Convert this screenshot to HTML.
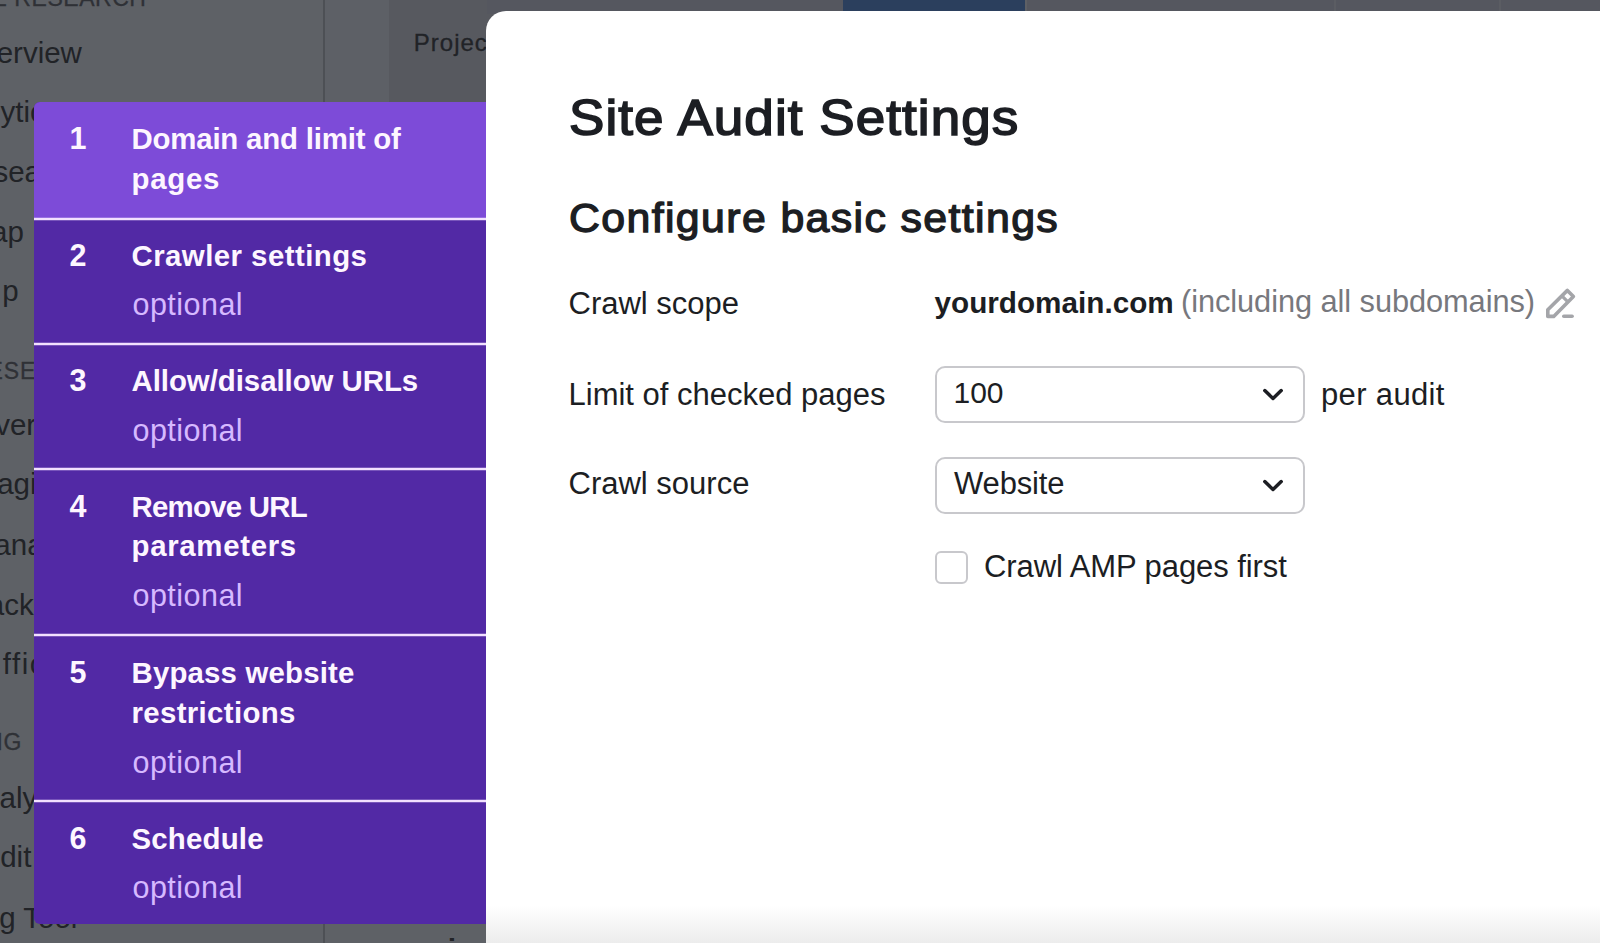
<!DOCTYPE html>
<html>
<head>
<meta charset="utf-8">
<style>
html,body{margin:0;padding:0;}
body{width:1600px;height:943px;overflow:hidden;position:relative;background:#5e6166;font-family:"Liberation Sans",sans-serif;}
div{position:absolute;}
.t{white-space:nowrap;}
</style>
</head>
<body>
<div style="left:0;top:0;width:323px;height:943px;background:#5e6166;"></div>
<div style="left:323px;top:0;width:2px;height:943px;background:#4d5055;"></div>
<div style="left:325px;top:0;width:64px;height:110px;background:#5d6066;"></div>
<div style="left:389px;top:0;width:1211px;height:110px;background:#57595f;"></div>
<div style="left:487px;top:0;width:1113px;height:14px;background:#55575f;"></div>
<div style="left:1334px;top:0;width:2px;height:14px;background:#5b5d63;"></div>
<div style="left:1499px;top:0;width:2px;height:14px;background:#5b5d63;"></div>
<div style="left:1025px;top:0;width:2px;height:14px;background:#5e6065;"></div>
<div style="left:843px;top:0;width:182px;height:12px;background:#2b3f5d;"></div>
<div class="t" style="right:1518.10px;top:38.03px;font-size:29.5px;line-height:29.5px;color:#212327;">Overview</div>
<div class="t" style="left:0.60px;top:96.73px;font-size:29.5px;line-height:29.5px;font-weight:400;color:#212327;letter-spacing:0px;">ytics</div>
<div class="t" style="left:-6.60px;top:156.73px;font-size:29.5px;line-height:29.5px;font-weight:400;color:#212327;letter-spacing:0px;">search</div>
<div class="t" style="left:-8.90px;top:216.83px;font-size:29.5px;line-height:29.5px;font-weight:400;color:#212327;letter-spacing:0px;">ap</div>
<div class="t" style="left:2.20px;top:276.23px;font-size:29.5px;line-height:29.5px;font-weight:400;color:#212327;letter-spacing:0px;">p</div>
<div class="t" style="left:-4.85px;top:410.23px;font-size:29.5px;line-height:29.5px;font-weight:400;color:#212327;letter-spacing:0px;">ver</div>
<div class="t" style="left:-2.80px;top:469.13px;font-size:29.5px;line-height:29.5px;font-weight:400;color:#212327;letter-spacing:0px;">agic</div>
<div class="t" style="left:-5.70px;top:529.73px;font-size:29.5px;line-height:29.5px;font-weight:400;color:#212327;letter-spacing:0px;">anager</div>
<div class="t" style="left:-12.20px;top:589.63px;font-size:29.5px;line-height:29.5px;font-weight:400;color:#212327;letter-spacing:0px;">acking</div>
<div class="t" style="left:2.80px;top:649.33px;font-size:29.5px;line-height:29.5px;font-weight:400;color:#212327;letter-spacing:1.5px;">ffic</div>
<div class="t" style="left:-0.50px;top:782.73px;font-size:29.5px;line-height:29.5px;font-weight:400;color:#212327;letter-spacing:0px;">alytics</div>
<div class="t" style="left:0.20px;top:842.43px;font-size:29.5px;line-height:29.5px;font-weight:400;color:#212327;letter-spacing:0px;">dit</div>
<div class="t" style="left:-0.80px;top:902.93px;font-size:29.5px;line-height:29.5px;font-weight:400;color:#212327;letter-spacing:0px;">g Tool</div>
<div class="t" style="left:-8.50px;top:-12.97px;font-size:23px;line-height:23px;font-weight:400;color:#2f3136;letter-spacing:0.55px;-webkit-text-stroke:0.3px #2f3136;">E RESEARCH</div>
<div class="t" style="left:-12.40px;top:359.53px;font-size:23px;line-height:23px;font-weight:400;color:#2f3136;letter-spacing:0.8px;-webkit-text-stroke:0.3px #2f3136;">ESEARCH</div>
<div class="t" style="left:-13.90px;top:731.13px;font-size:23px;line-height:23px;font-weight:400;color:#2f3136;letter-spacing:0.8px;-webkit-text-stroke:0.3px #2f3136;">NG</div>
<div class="t" style="left:413.80px;top:31.28px;font-size:24px;line-height:24px;font-weight:400;color:#212327;letter-spacing:1.0px;-webkit-text-stroke:0.3px #212327;">Projects</div>
<div class="t" style="left:409.00px;top:934.61px;font-size:30px;line-height:30px;font-weight:700;color:#212327;letter-spacing:1px;">ooing</div>
<div style="left:486px;top:11px;width:1200px;height:1000px;background:#fff;border-top-left-radius:20px;"></div>
<div style="left:486px;top:905px;width:1114px;height:38px;background:linear-gradient(#ffffff,#ececec);"></div>
<div style="left:34px;top:102px;width:452px;height:822px;background:#5229a5;border-radius:6px 0 0 6px;"></div>
<div style="left:34px;top:102px;width:452px;height:116px;background:#7d4bd8;border-radius:6px 0 0 0;"></div>
<div style="left:34px;top:218px;width:452px;height:2px;background:#f2e0ff;box-shadow:0 -0.5px 0 #f2e0ff80, 0 0.5px 0 #f2e0ff80;"></div>
<div style="left:34px;top:343px;width:452px;height:2px;background:#f2e0ff;box-shadow:0 -0.5px 0 #f2e0ff80, 0 0.5px 0 #f2e0ff80;"></div>
<div style="left:34px;top:468px;width:452px;height:2px;background:#f2e0ff;box-shadow:0 -0.5px 0 #f2e0ff80, 0 0.5px 0 #f2e0ff80;"></div>
<div style="left:34px;top:634px;width:452px;height:2px;background:#f2e0ff;box-shadow:0 -0.5px 0 #f2e0ff80, 0 0.5px 0 #f2e0ff80;"></div>
<div style="left:34px;top:800px;width:452px;height:2px;background:#f2e0ff;box-shadow:0 -0.5px 0 #f2e0ff80, 0 0.5px 0 #f2e0ff80;"></div>
<div class="t" style="left:69.50px;top:122.78px;font-size:30.5px;line-height:30.5px;font-weight:700;color:#fdf6ff;letter-spacing:0px;">1</div>
<div class="t" style="left:131.50px;top:123.71px;font-size:29.4px;line-height:29.4px;font-weight:700;color:#fdf6ff;letter-spacing:-0.19px;">Domain and limit of</div>
<div class="t" style="left:131.50px;top:164.11px;font-size:29.4px;line-height:29.4px;font-weight:700;color:#fdf6ff;letter-spacing:0.75px;">pages</div>
<div class="t" style="left:69.50px;top:239.98px;font-size:30.5px;line-height:30.5px;font-weight:700;color:#fdf6ff;letter-spacing:0px;">2</div>
<div class="t" style="left:131.50px;top:240.91px;font-size:29.4px;line-height:29.4px;font-weight:700;color:#fdf6ff;letter-spacing:0.45px;">Crawler settings</div>
<div class="t" style="left:132.50px;top:288.68px;font-size:30.5px;line-height:30.5px;font-weight:400;color:#d6b9ff;letter-spacing:0.47px;">optional</div>
<div class="t" style="left:69.50px;top:365.18px;font-size:30.5px;line-height:30.5px;font-weight:700;color:#fdf6ff;letter-spacing:0px;">3</div>
<div class="t" style="left:131.50px;top:366.11px;font-size:29.4px;line-height:29.4px;font-weight:700;color:#fdf6ff;letter-spacing:-0.04px;">Allow/disallow URLs</div>
<div class="t" style="left:132.50px;top:414.78px;font-size:30.5px;line-height:30.5px;font-weight:400;color:#d6b9ff;letter-spacing:0.47px;">optional</div>
<div class="t" style="left:69.50px;top:490.68px;font-size:30.5px;line-height:30.5px;font-weight:700;color:#fdf6ff;letter-spacing:0px;">4</div>
<div class="t" style="left:131.50px;top:491.61px;font-size:29.4px;line-height:29.4px;font-weight:700;color:#fdf6ff;letter-spacing:-0.74px;">Remove URL</div>
<div class="t" style="left:131.50px;top:530.91px;font-size:29.4px;line-height:29.4px;font-weight:700;color:#fdf6ff;letter-spacing:0.69px;">parameters</div>
<div class="t" style="left:132.50px;top:580.48px;font-size:30.5px;line-height:30.5px;font-weight:400;color:#d6b9ff;letter-spacing:0.47px;">optional</div>
<div class="t" style="left:69.50px;top:656.58px;font-size:30.5px;line-height:30.5px;font-weight:700;color:#fdf6ff;letter-spacing:0px;">5</div>
<div class="t" style="left:131.50px;top:657.51px;font-size:29.4px;line-height:29.4px;font-weight:700;color:#fdf6ff;letter-spacing:0.18px;">Bypass website</div>
<div class="t" style="left:131.50px;top:698.11px;font-size:29.4px;line-height:29.4px;font-weight:700;color:#fdf6ff;letter-spacing:0.35px;">restrictions</div>
<div class="t" style="left:132.50px;top:747.18px;font-size:30.5px;line-height:30.5px;font-weight:400;color:#d6b9ff;letter-spacing:0.47px;">optional</div>
<div class="t" style="left:69.50px;top:822.58px;font-size:30.5px;line-height:30.5px;font-weight:700;color:#fdf6ff;letter-spacing:0px;">6</div>
<div class="t" style="left:131.50px;top:823.51px;font-size:29.4px;line-height:29.4px;font-weight:700;color:#fdf6ff;letter-spacing:0.19px;">Schedule</div>
<div class="t" style="left:132.50px;top:872.18px;font-size:30.5px;line-height:30.5px;font-weight:400;color:#d6b9ff;letter-spacing:0.47px;">optional</div>
<div class="t" style="left:568.50px;top:93.18px;font-size:50px;line-height:50px;font-weight:400;color:#1c1e23;letter-spacing:1.0px;-webkit-text-stroke:1.6px #1c1e23;transform:scaleX(1.06);transform-origin:0 0;">Site Audit Settings</div>
<div class="t" style="left:568.50px;top:197.64px;font-size:40px;line-height:40px;font-weight:400;color:#1c1e23;letter-spacing:1.3px;-webkit-text-stroke:1.3px #1c1e23;transform:scaleX(1.07);transform-origin:0 0;">Configure basic settings</div>
<div class="t" style="left:568.50px;top:287.66px;font-size:31px;line-height:31px;font-weight:400;color:#1c1e23;letter-spacing:0px;">Crawl scope</div>
<div class="t" style="left:934.50px;top:287.86px;font-size:29.7px;line-height:29.7px;font-weight:700;color:#1c1e23;letter-spacing:0px;">yourdomain.com</div>
<div class="t" style="left:1181.00px;top:287.47px;font-size:30.75px;line-height:30.75px;font-weight:400;color:#77787d;letter-spacing:-0.06px;">(including all subdomains)</div>
<svg style="position:absolute;left:1540px;top:284px;" width="40" height="40" viewBox="0 0 40 40">
  <path d="M7.8 32.4 L7.8 25.8 L27.4 6.4 L33.4 12.5 L13.7 32.4 Z" fill="none" stroke="#a4a5a9" stroke-width="3.6" stroke-linejoin="round"/>
  <path d="M21.9 11.9 L28.4 18.4" stroke="#a4a5a9" stroke-width="3.2"/>
  <path d="M23.8 32.3 L32.1 32.3" stroke="#a4a5a9" stroke-width="3.6" stroke-linecap="round"/>
</svg>
<div class="t" style="left:568.50px;top:378.56px;font-size:31px;line-height:31px;font-weight:400;color:#1c1e23;letter-spacing:0px;">Limit of checked pages</div>
<div style="left:935px;top:366px;width:366px;height:53px;border:2px solid #c8c8cc;border-radius:10px;background:#fff;"></div>
<div class="t" style="left:953.50px;top:378.11px;font-size:30px;line-height:30px;font-weight:400;color:#1c1e23;letter-spacing:0px;">100</div>
<svg style="position:absolute;left:1260px;top:386px;" width="26" height="18" viewBox="0 0 26 18"><path d="M4.8 4.6 L13 12.4 L21.2 4.6" fill="none" stroke="#1c1e23" stroke-width="3.5" stroke-linecap="round" stroke-linejoin="round"/></svg>
<div class="t" style="left:1321.00px;top:378.56px;font-size:31px;line-height:31px;font-weight:400;color:#1c1e23;letter-spacing:0.35px;">per audit</div>
<div class="t" style="left:568.50px;top:468.36px;font-size:31px;line-height:31px;font-weight:400;color:#1c1e23;letter-spacing:0px;">Crawl source</div>
<div style="left:935px;top:457px;width:366px;height:53px;border:2px solid #c8c8cc;border-radius:10px;background:#fff;"></div>
<div class="t" style="left:954.00px;top:468.36px;font-size:31px;line-height:31px;font-weight:400;color:#1c1e23;letter-spacing:-0.15px;">Website</div>
<svg style="position:absolute;left:1260px;top:477px;" width="26" height="18" viewBox="0 0 26 18"><path d="M4.8 4.6 L13 12.4 L21.2 4.6" fill="none" stroke="#1c1e23" stroke-width="3.5" stroke-linecap="round" stroke-linejoin="round"/></svg>
<div style="left:935px;top:551px;width:29px;height:29px;border:2px solid #c8c8cc;border-radius:6px;background:#fff;"></div>
<div class="t" style="left:984.00px;top:550.96px;font-size:31px;line-height:31px;font-weight:400;color:#1c1e23;letter-spacing:-0.08px;">Crawl AMP pages first</div>
</body>
</html>
